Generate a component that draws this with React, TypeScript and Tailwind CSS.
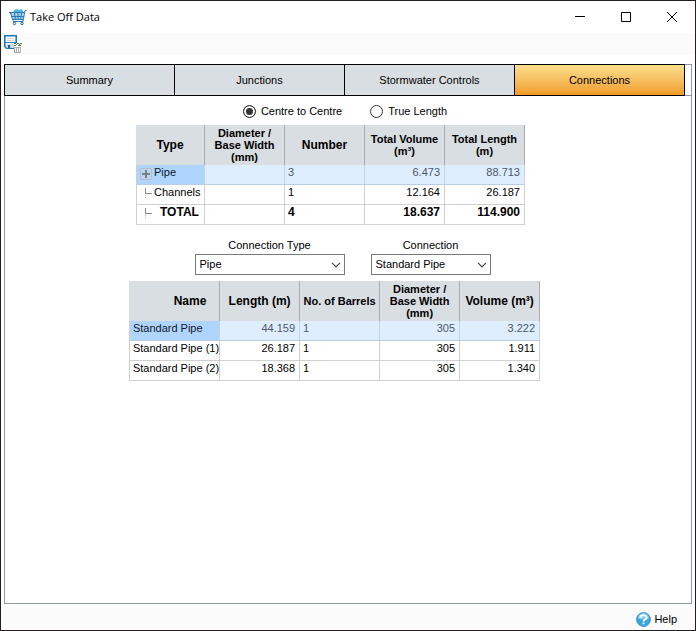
import React from 'react'

type Cell = string

interface Column {
    label: string[]
    small?: boolean
    align?: 'left' | 'right'
}

const TABS = ['Summary', 'Junctions', 'Stormwater Controls', 'Connections']

const SUMMARY_COLUMNS: Column[] = [
    { label: ['Type'] },
    { label: ['Diameter /', 'Base Width', '(mm)'], small: true },
    { label: ['Number'] },
    { label: ['Total Volume', '(m³)'], small: true, align: 'right' },
    { label: ['Total Length', '(m)'], small: true, align: 'right' },
]

const SUMMARY_ROWS: Cell[][] = [
    ['Pipe', '', '3', '6.473', '88.713'],
    ['Channels', '', '1', '12.164', '26.187'],
    ['TOTAL', '', '4', '18.637', '114.900'],
]

const DETAIL_COLUMNS: Column[] = [
    { label: ['Name'] },
    { label: ['Length (m)'], align: 'right' },
    { label: ['No. of Barrels'], small: true },
    { label: ['Diameter /', 'Base Width', '(mm)'], small: true, align: 'right' },
    { label: ['Volume (m³)'], align: 'right' },
]

const DETAIL_ROWS: Cell[][] = [
    ['Standard Pipe', '44.159', '1', '305', '3.222'],
    ['Standard Pipe (1)', '26.187', '1', '305', '1.911'],
    ['Standard Pipe (2)', '18.368', '1', '305', '1.340'],
]

const CartIcon = () => (
    <svg width="18" height="18" viewBox="0 0 18 18" fill="none">
        <path d="M4 5 5 2 8 1 10 2 12 1 14 3 14 5Z" fill="#4fb4e6" />
        <path d="M1 5H15L14 12H4Z" fill="#a6d0ec" />
        <path
            d="M0 4.5H16M1.5 5 4 12.5M2 8.5H15M3 11.5H14M5.5 5 6.5 12M9 5V12M12.5 5 11.5 12M17.5 2.5H16L14 13.5H4"
            stroke="#2a78b8"
        />
        <circle cx="5.5" cy="15.5" r="1.2" stroke="#1d5c96" />
        <circle cx="13" cy="15.5" r="1.2" stroke="#1d5c96" />
    </svg>
)

const SaveIcon = () => (
    <svg width="18" height="18" viewBox="0 0 18 18" fill="none">
        <path d="M.8.8H12.2V13.2H2.5L.8 11.5Z" fill="#fff" stroke="#1c78bd" strokeWidth="1.6" />
        <path d="M3 3.5H10M3 5.5H10" stroke="#d5d9dc" />
        <path d="M1 7.5H12" stroke="#2b83c4" />
        <path d="M3 9H10V13H3Z" fill="#c9d8e4" />
        <path d="M4 10H6V13H4Z" fill="#1c5f96" />
        <path d="M10 8H18V18H10Z" fill="#fff" />
        <path d="M10 8.5H12M13 8.5H15M16 8.5H18M10 10.5H12M12 9.5H13M14 10.5H17M15 9.5H16" stroke="#3f7a35" />
        <path d="M10 12.5H17M10.5 12V17M12.5 12V17M14.5 12V17M16.5 12V17M10 17.5H17" stroke="#a9adaf" />
    </svg>
)

const HelpIcon = () => (
    <svg width="15" height="15" viewBox="0 0 16 16" fill="none">
        <circle cx="8" cy="8" r="7.4" fill="#3aa5dc" stroke="#3f94c4" />
        <path d="M2 7A6 6 0 0 1 14 7Q8 10 2 7Z" fill="#7cc9ee" />
        <path d="M4.6 6.4C4.6 2.6 11.4 2.6 11.4 6.2 11.4 8 8 8 8 10" stroke="#fff" strokeWidth="2" />
        <path d="M7 11.2H9V13H7Z" fill="#fff" />
    </svg>
)

/** Expander box or dotted branch drawn left of a row name. */
const TreeMark = ({ expandable }: { expandable: boolean }) =>
    expandable ? (
        <svg className="mt-[3px] shrink-0" width="12" height="12" viewBox="0 0 12 12" fill="none">
            <path d="M.5.5H11.5V11.5H.5Z" fill="#b9d6f2" stroke="#b9bec4" />
            <path d="M2 6H10M6 2V10" stroke="#7b8088" strokeWidth="2" />
        </svg>
    ) : (
        <svg className="shrink-0" width="12" height="14" viewBox="0 0 12 14" fill="none">
            <path d="M5.5 3V8M5 8.5H12" stroke="#8c8c8c" />
            <path d="M5.5 10V14" stroke="#b5b5b5" strokeDasharray="1 1" />
        </svg>
    )

interface GridProps {
    caption: string
    columns: Column[]
    rows: Cell[][]
    firstWidth: string
    tree?: boolean
}

const DataGrid: React.FC<GridProps> = ({ caption, columns, rows, firstWidth, tree }) => (
    <table
        aria-label={caption}
        className="table-fixed border-separate border-spacing-0 text-[11px] leading-[14px]"
    >
        <colgroup>
            {columns.map((_, i) => (
                <col key={i} className={i === 0 ? firstWidth : 'w-20'} />
            ))}
        </colgroup>
        <thead>
            <tr className="h-10 bg-[#d9dee2]">
                {columns.map((col, i) => (
                    <th
                        key={i}
                        className={`border-r border-[#a9adb1] p-0 align-middle font-bold leading-3 whitespace-nowrap ${
                            col.small ? 'text-[11px]' : 'text-xs'
                        } ${!tree && i === 0 ? 'pl-8' : ''}`}
                    >
                        {col.label.map((line) => (
                            <div key={line}>{line}</div>
                        ))}
                    </th>
                ))}
            </tr>
        </thead>
        <tbody>
            {rows.map((row, r) => {
                const selected = r === 0
                const total = row[0] === 'TOTAL'
                return (
                    <tr
                        key={row[0]}
                        className={`h-5 ${selected ? 'bg-[#deeeff] text-[#4d5869]' : ''} ${
                            total ? 'text-xs leading-[14px] font-bold' : ''
                        }`}
                    >
                        {row.map((value, i) => (
                            <td
                                key={i}
                                className={`border-r border-b p-0 align-top whitespace-nowrap ${
                                    selected ? 'border-r-[#c5d3e2] border-b-[#bccde2]' : 'border-[#d0d0d0]'
                                } ${i === 0 ? 'border-l border-l-[#d0d0d0]' : ''} ${
                                    selected && i === 0 ? 'bg-[#afd5ff] text-[#101828]' : ''
                                } ${columns[i].align === 'right' ? 'pr-1 text-right' : 'pl-[3px]'}`}
                            >
                                {tree && i === 0 ? (
                                    <div className="flex gap-0.5">
                                        <TreeMark expandable={selected} />
                                        <span className={total ? 'pl-1.5' : ''}>{value}</span>
                                    </div>
                                ) : (
                                    value
                                )}
                            </td>
                        ))}
                    </tr>
                )
            })}
        </tbody>
    </table>
)

interface PickerProps {
    id: string
    label: string
    options: string[]
    width: string
}

const Picker: React.FC<PickerProps> = ({ id, label, options, width }) => (
    <div className={`flex flex-col items-center gap-px ${width}`}>
        <label htmlFor={id} className="leading-4">
            {label}
        </label>
        <div className="relative w-full">
            <select
                id={id}
                className="block h-[21px] w-full appearance-none border border-[#7a7a7a] bg-white pb-px pl-1 leading-4"
            >
                {options.map((option) => (
                    <option key={option}>{option}</option>
                ))}
            </select>
            <svg
                className="pointer-events-none absolute top-2 right-1"
                width="10"
                height="6"
                viewBox="0 0 10 6"
                fill="none"
            >
                <path d="M1 .8 5 4.8 9 .8" stroke="#444" strokeWidth="1.2" />
            </svg>
        </div>
    </div>
)

const RadioOption = ({ label, checked }: { label: string; checked?: boolean }) => (
    <label className="flex items-center gap-[5px]">
        <input
            type="radio"
            name="measure"
            defaultChecked={checked}
            className="size-[13px] appearance-none rounded-full border border-[#333] bg-white checked:bg-[#333] checked:shadow-[inset_0_0_0_2px_white]"
        />
        {label}
    </label>
)

export default function App() {
    return (
        <div className="flex min-h-screen flex-col border border-[#231f20] bg-white font-['Liberation_Sans',Arial,sans-serif] text-[11px] text-black">
            <header className="flex h-8 items-center pl-2">
                <CartIcon />
                <h1 className="flex-1 pl-[3px] font-['Open_Sans','Noto_Sans',sans-serif] text-[11px]">
                    Take Off Data
                </h1>
                <button aria-label="Minimize" className="flex h-full w-[46px] items-center justify-center">
                    <svg width="10" height="10" viewBox="0 0 10 10">
                        <path d="M0 4.5H10" stroke="#000" />
                    </svg>
                </button>
                <button aria-label="Maximize" className="flex h-full w-[46px] items-center justify-center">
                    <svg width="10" height="10" viewBox="0 0 10 10">
                        <path d="M.5.5H9.5V9.5H.5Z" fill="none" stroke="#000" />
                    </svg>
                </button>
                <button aria-label="Close" className="flex h-full w-[46px] items-center justify-center">
                    <svg width="10" height="10" viewBox="0 0 10 10">
                        <path d="M0 0 10 10M10 0 0 10" stroke="#000" />
                    </svg>
                </button>
            </header>

            <div className="flex h-[22px] items-center bg-[#fbfbfb] pl-[3px]">
                <button aria-label="Save">
                    <SaveIcon />
                </button>
            </div>

            <main className="mx-[3px] mt-[9px] flex flex-1 flex-col border border-[#8e99a3]">
                <div className="-mt-px -ml-px flex h-8 border-b border-[#8e99a3] pr-1.5">
                    <div role="tablist" className="-mb-px flex flex-1 border-l border-black">
                        {TABS.map((tab) => {
                            const active = tab === 'Connections'
                            return (
                                <button
                                    key={tab}
                                    role="tab"
                                    aria-selected={active}
                                    className={`flex-1 basis-0 border-y border-r border-black whitespace-nowrap ${
                                        active
                                            ? 'bg-linear-to-b from-[#fae08c] to-[#f09c24]'
                                            : 'bg-[#d9dee2]'
                                    }`}
                                >
                                    {tab}
                                </button>
                            )
                        })}
                    </div>
                </div>

                <div className="flex h-[29px] items-center justify-center gap-7 pt-px pr-1.5">
                    <RadioOption label="Centre to Centre" checked />
                    <RadioOption label="True Length" />
                </div>

                <div className="flex justify-center pr-[35px]">
                    <DataGrid
                        caption="Connection totals"
                        columns={SUMMARY_COLUMNS}
                        rows={SUMMARY_ROWS}
                        firstWidth="w-[69px]"
                        tree
                    />
                </div>

                <div className="flex justify-center gap-[26px] pt-3 pr-[11px] pb-1.5">
                    <Picker
                        id="connection-type"
                        label="Connection Type"
                        options={['Pipe', 'Channels']}
                        width="w-[150px]"
                    />
                    <Picker
                        id="connection"
                        label="Connection"
                        options={DETAIL_ROWS.map((row) => row[0])}
                        width="w-[120px]"
                    />
                </div>

                <div className="flex justify-center pr-[27px]">
                    <DataGrid
                        caption="Connection details"
                        columns={DETAIL_COLUMNS}
                        rows={DETAIL_ROWS}
                        firstWidth="w-[91px]"
                    />
                </div>
            </main>

            <footer className="mt-1 flex h-[22px] items-center justify-end bg-[#fbfbfb] pr-[18px]">
                <button className="flex items-center gap-[3px]">
                    <HelpIcon />
                    Help
                </button>
            </footer>
        </div>
    )
}
